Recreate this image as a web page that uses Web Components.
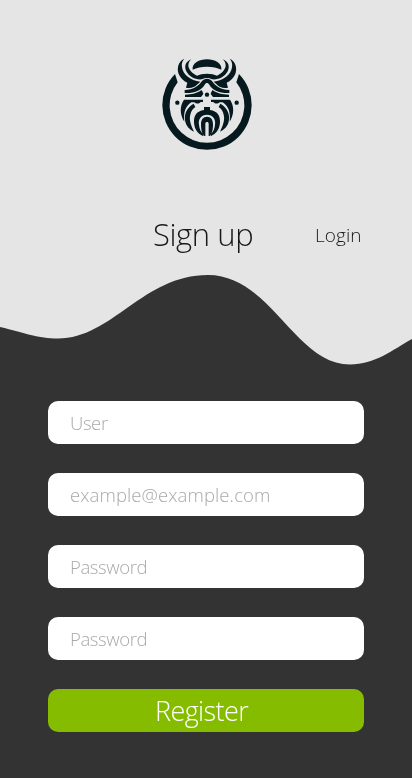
<!DOCTYPE html>
<html lang="en">
<head>
<meta charset="utf-8">
<title>Sign up</title>
<style>
html,body{margin:0;height:100%;background:#333}
body{font-family:"Open Sans","Noto Sans",sans-serif;font-weight:300}
</style>
</head>
<body>
<signup-page></signup-page>
<script>
const define = (name, html) => customElements.define(name, class extends HTMLElement {
  constructor() {
    super();
    this.attachShadow({mode: 'open'}).innerHTML = html;
  }
});

define('viking-logo', `
<style>:host{display:block;width:100px;height:104px}svg{display:block}</style>
<svg width="100" height="104" viewBox="0 0 300 312" fill="#06191f">
  <path d="M54 66A134 134 0 1 0 246 66L238 91A112 112 0 1 1 62 91Z"/>
  <path d="M107 53C104 33 127 22 150 22S196 33 193 53C180 47 168 44 150 44S120 47 107 53Z"/>
  <circle cx="150" cy="128" r="6.500"/>
  <g id="half">
    <path d="M82 20C62 29 58 53 67 70C73 81 81 88 91 92L87 107C103 110 113 105 119 99L130 89C100 86 78 68 75 46C73 35 76 27 82 20Z"/>
    <path d="M103 22C85 29 81 44 88 58C97 75 115 84 135 82C140 79 145 78 150.500 78V65C137 65 128 67 120 71C106 65 96 53 94 42C94 33 97 27 103 22Z"/>
    <path d="M150.500 80C142 80 137 84 132 91C124 103 108 113 83 114V123C115 124 135 113 143 98C145 95 147 93 150.500 93Z"/>
    <path d="M133 114C121 124 105 127 84 128V135H132L139 126C138 121 136 117 133 114Z"/>
    <path d="M81 143H138V150H131C126 156 117 156 112 151H103C86 163 79 178 82 209C68 187 68 162 81 143Z"/>
    <path d="M110 155C89 167 80 186 85 209C88 222 96 231 111 239C101 217 96 202 100 188C102 177 107 171 115 165Z"/>
    <path d="M150.500 165H141V174C119 177 110 191 111 211C112 230 120 244 139 253V246C131 240 127 230 126 218C123 202 132 188 150.500 188Z"/>
    <path d="M150.500 194C138 194 132 203 132 217C132 235 135 245 142 252H145V216C145 212 147 210 150.500 210Z"/>
    <circle cx="61" cy="152" r="6.500"/>
  </g>
  <use href="#half" transform="translate(300 0) scale(-1 1)"/>
</svg>`);

define('page-header', `
<style>
:host{display:grid;grid-template-rows:52px 104px 48px 60px;justify-items:center;height:378px;background:#e5e5e5;position:relative;box-sizing:border-box}
.logo{grid-row:2;margin-left:2px}
nav{grid-row:4;width:100%;display:grid;grid-template-columns:153px 162px 1fr;align-items:center;color:#181818;z-index:1;white-space:nowrap}
.wave{position:absolute;left:0;bottom:0}
</style>
<viking-logo class="logo"></viking-logo>
<nav><span></span><slot></slot></nav>
<svg class="wave" width="412" height="118" viewBox="0 260 412 118"><path fill="#333" d="M0 327C25 333 38 338.500 58 338.500C112 338.500 143 275 208 275C271 275 295 364.500 350 364.500C375 364.500 392 350 412 339V379H0Z"/></svg>`);

define('nav-title', `<style>:host{display:block;font-size:31px;line-height:60px;letter-spacing:-.4px;will-change:transform}</style><slot></slot>`);
define('nav-link', `<style>:host{display:block;font-size:19px;line-height:58px;padding-top:2px;letter-spacing:.05px;will-change:transform}</style><slot></slot>`);

define('form-field', `
<style>
:host{display:flex;align-items:center;height:43px;box-sizing:border-box;padding:0 22px;background:#fff;border-radius:10px;color:#a9a9a9;font-size:18.500px;white-space:nowrap}
span{letter-spacing:-.4px;will-change:transform}
:host([type=email]) span{letter-spacing:.1px}
</style><span><slot></slot></span>`);

define('submit-button', `
<style>
:host{display:flex;align-items:center;justify-content:center;height:43px;background:#86bc00;border-radius:10px;color:#fff;font-size:27px;letter-spacing:-.6px}
span{margin-left:-8px;will-change:transform}
</style><span><slot></slot></span>`);

define('signup-form', `
<style>:host{display:grid;gap:29px;padding:23px 48px 46px}</style><slot></slot>`);

define('signup-page', `
<style>:host{display:block;width:412px;height:778px;overflow:hidden;background:#333}</style>
<page-header><nav-title>Sign up</nav-title><nav-link>Login</nav-link></page-header>
<signup-form>
  <form-field>User</form-field>
  <form-field type="email">example@example.com</form-field>
  <form-field>Password</form-field>
  <form-field>Password</form-field>
  <submit-button>Register</submit-button>
</signup-form>`);
</script>
</body>
</html>
